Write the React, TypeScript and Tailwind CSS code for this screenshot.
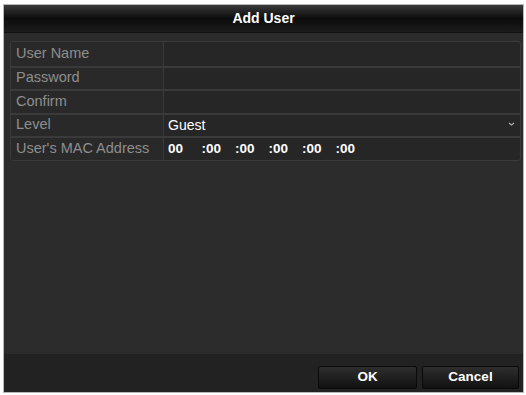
import React from "react";

const font = { fontFamily: '"Liberation Sans", Arial, sans-serif' };

const rows: { label: string; value?: React.ReactNode }[] = [
    { label: "User Name" },
    { label: "Password" },
    { label: "Confirm" },
    { label: "Level", value: "Guest" },
    { label: "User's MAC Address", value: "mac" },
];

const MacField: React.FC = () => {
    const groups = ["00", ":00", ":00", ":00", ":00", ":00"];
    return (
        <div className="flex items-center">
            {groups.map((g, i) => (
                <span key={i} className="w-[33.5px] text-white font-bold text-[13.5px]">
                    {g}
                </span>
            ))}
        </div>
    );
};

export default function App() {
    return (
        <div className="w-[526px] h-[395px] bg-white pt-[4px] pl-[3px] pr-[2px] pb-[2px]" style={font}>
            <div className="flex flex-col h-full border border-[#b8b8b8] bg-[#2c2c2c]">
                {/* Title bar */}
                <div className="h-[28px] flex items-center justify-center bg-gradient-to-b from-[#3a3a3a] via-[#0c0c0c] to-[#1c1c1c] border-b border-[#111]">
                    <span className="text-white font-bold text-[14px]">Add User</span>
                </div>

                {/* Form */}
                <div className="flex-1 pt-[8px] pl-[6px] pr-[2px]">
                    <div className="border border-[#3a3a3a] rounded-[3px] bg-[#262626]">
                        {rows.map((row, i) => (
                            <div
                                key={row.label}
                                className={`flex h-[23.5px] items-center ${i > 0 ? "border-t-2 border-[#3a3a3a]" : ""}`}
                            >
                                <div className="w-[153px] h-full flex items-center pl-[5px] text-[14.5px] text-[#8e8e8e] border-r border-[#3a3a3a] bg-[#292929]">
                                    {row.label}
                                </div>
                                <div className="flex-1 h-full flex items-center pl-[4px] pr-[5px] justify-between">
                                    {row.value === "mac" ? (
                                        <MacField />
                                    ) : row.value ? (
                                        <span className="text-white text-[14px]">{row.value}</span>
                                    ) : null}
                                    {row.label === "Level" && (
                                        <svg width="7" height="4" viewBox="0 0 7 4" className="mt-[-2px]">
                                            <path d="M1 1 L3.5 3 L6 1" stroke="#aaa" strokeWidth="1.3" fill="none" />
                                        </svg>
                                    )}
                                </div>
                            </div>
                        ))}
                    </div>
                </div>

                {/* Footer */}
                <div className="h-[38px] bg-[#222222] flex items-start justify-end gap-[5px] pt-[12px] pr-[4px]">
                    <button className="w-[99px] h-[23px] rounded-[2px] bg-gradient-to-b from-[#2e2e2e] to-[#121212] border border-[#0a0a0a] text-white font-bold text-[13.5px]">
                        OK
                    </button>
                    <button className="w-[97px] h-[23px] rounded-[2px] bg-gradient-to-b from-[#2e2e2e] to-[#121212] border border-[#0a0a0a] text-white font-bold text-[13.5px]">
                        Cancel
                    </button>
                </div>
            </div>
        </div>
    );
}
